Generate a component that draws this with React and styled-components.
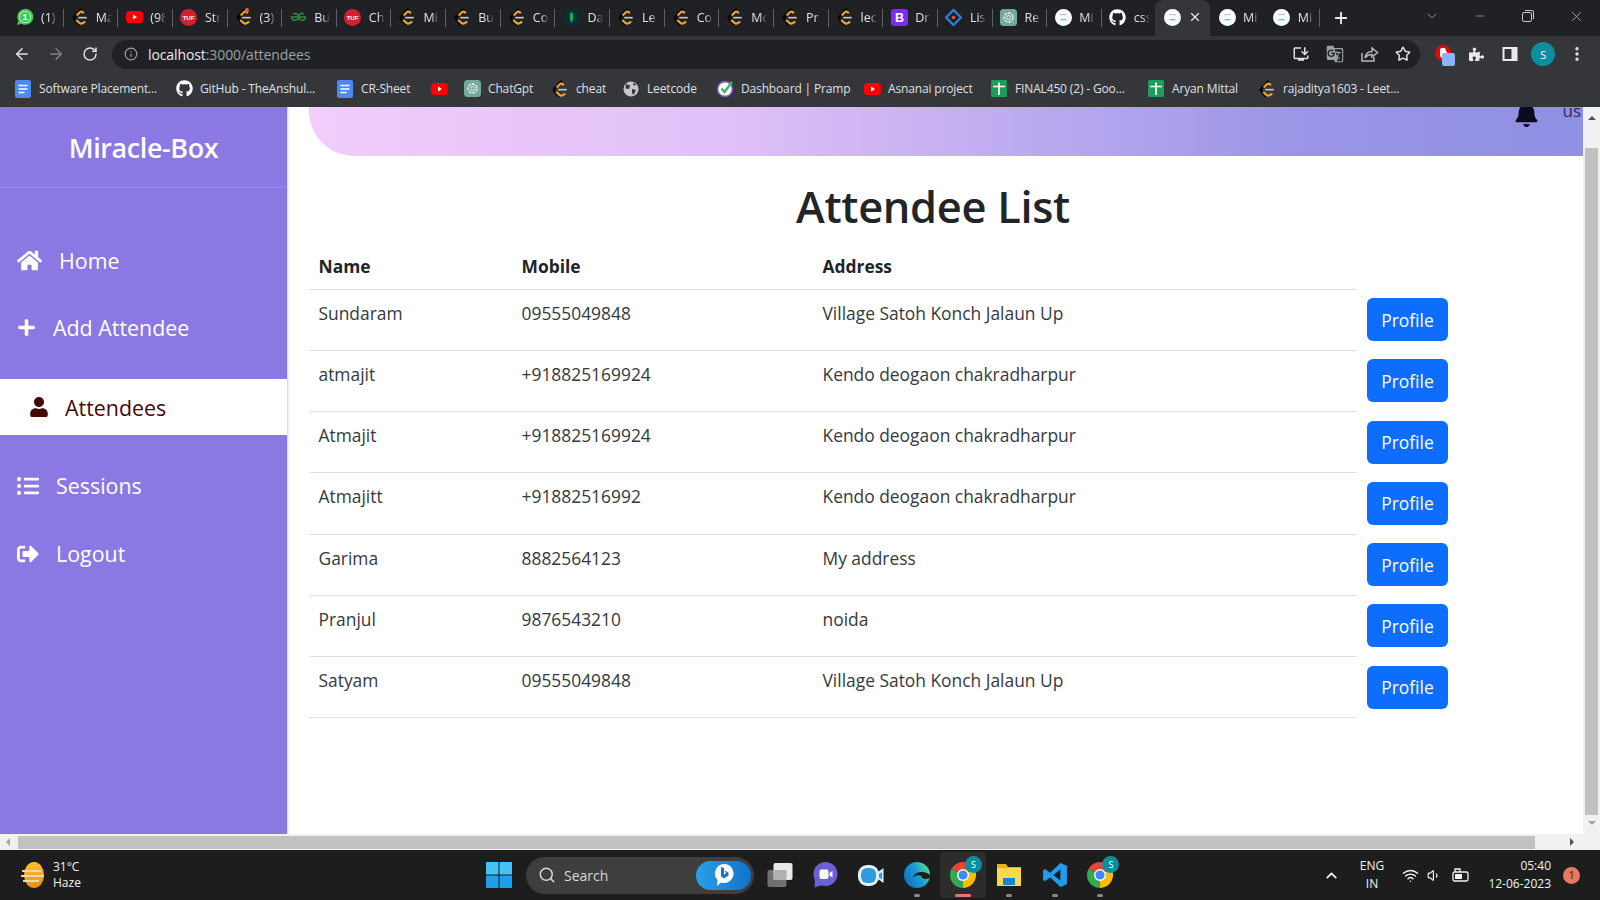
import React from "react"
import styled, { createGlobalStyle } from "styled-components"
import { FaHome, FaPlus, FaUser, FaListUl, FaSignOutAlt, FaBell, FaGithub, FaPuzzlePiece } from "react-icons/fa"
import { MdGTranslate, MdInstallDesktop } from "react-icons/md"
import { ArrowLeft, ArrowRight, RotateCw, Info, Star, MoreVertical, Plus, X, Minus, ChevronDown, ChevronUp, Search, Wifi, Volume1 } from "lucide-react"

const GlobalStyle = createGlobalStyle`
	html, body {
		margin: 0;
		padding: 0;
		overflow: hidden;
		background: #fff;
	}
	* {
		box-sizing: border-box;
	}
	body {
		font-family: "Open Sans", "Noto Sans", "Liberation Sans", sans-serif;
	}
`

const Shell = styled.div`
	width: 1600px;
	height: 900px;
	display: flex;
	flex-direction: column;
	overflow: hidden;
`

/* ---- favicons ---- */

const LeetIcon = ({ dot }) => (
	<svg width="18" height="18" viewBox="0 0 16 16">
		<path d="M9.5 .8 L3 7.6 Q2 8.8 3 10 L7.5 15" fill="none" stroke="#050505" strokeWidth="2.2" />
		<path d="M5 6.6 L8 3.6 Q9.6 2.6 11.4 4.6" fill="none" stroke="#f0a52b" strokeWidth="1.9" />
		<path d="M4.6 10.6 L7.4 13.2 Q9.6 15 12.6 12" fill="none" stroke="#f0a52b" strokeWidth="1.9" />
		<path d="M6.4 8.6 H14" stroke="#c4c4c4" strokeWidth="1.5" />
		{dot ? <circle cx="10.5" cy="2" r="1.9" fill="#e2624b" /> : null}
	</svg>
)

const YoutubeIcon = () => (
	<svg width="17" height="14" viewBox="0 0 17 14">
		<rect width="17" height="12" y="1" rx="3.5" fill="#f00" />
		<path d="M7 4.5 L11 7 L7 9.5 Z" fill="#fff" />
	</svg>
)

const TufIcon = () => (
	<svg width="17" height="17" viewBox="0 0 17 17">
		<circle cx="8.5" cy="8.5" r="8.5" fill="#d2202f" />
		<text x="8.5" y="10.5" fontSize="6" fontWeight="700" textAnchor="middle" fill="#fff" fontFamily="Liberation Sans">TUF</text>
	</svg>
)

const WhatsappIcon = () => (
	<svg width="18" height="18" viewBox="0 0 18 18">
		<path d="M1 17 L2.3 12.6 A8 8 0 1 1 5.4 15.8 Z" fill="#3ecb55" />
		<circle cx="9" cy="9" r="6" fill="#fff" />
		<circle cx="9" cy="9" r="5.4" fill="#3ecb55" />
		<text x="9" y="12" fontSize="9" fontWeight="700" textAnchor="middle" fill="#fff" fontFamily="Liberation Sans">1</text>
	</svg>
)

const GfgIcon = () => (
	<svg width="17" height="12" viewBox="0 0 17 12">
		<path d="M8.5 6 H1.5 A3.4 3.4 0 1 0 3 3 M8.5 6 H15.5 A3.4 3.4 0 1 1 14 3" fill="none" stroke="#2f8d46" strokeWidth="1.5" />
	</svg>
)

const MongoIcon = () => (
	<svg width="17" height="17" viewBox="0 0 17 17">
		<circle cx="8.5" cy="8.5" r="8.5" fill="#062f33" />
		<path d="M8.5 2.5 C11 5.5 11 10 8.5 14 C6 10 6 5.5 8.5 2.5 Z" fill="#13aa52" />
	</svg>
)

const BootstrapIcon = () => (
	<svg width="17" height="17" viewBox="0 0 17 17">
		<rect width="17" height="17" rx="3" fill="#7a2bf5" />
		<text x="8.5" y="13" fontSize="12.5" fontWeight="700" textAnchor="middle" fill="#fff" fontFamily="Liberation Sans">B</text>
	</svg>
)

const DiamondIcon = () => (
	<svg width="17" height="17" viewBox="0 0 17 17">
		<path d="M8.5 1 L16 8.5 L8.5 16 L1 8.5 Z" fill="none" stroke="#2f7fe0" strokeWidth="2.2" />
		<circle cx="8.5" cy="8.5" r="1.8" fill="#e0524a" />
	</svg>
)

const GptIcon = () => (
	<svg width="17" height="17" viewBox="0 0 17 17">
		<rect width="17" height="17" rx="3.5" fill="#74aa9c" />
		<circle cx="8.5" cy="8.5" r="4.5" fill="none" stroke="#e8f3f0" strokeWidth="1.4" strokeDasharray="3 1" />
		<circle cx="8.5" cy="8.5" r="2" fill="none" stroke="#e8f3f0" strokeWidth="1" />
	</svg>
)

const MiracleIcon = () => (
	<svg width="17" height="17" viewBox="0 0 17 17">
		<circle cx="8.5" cy="8.5" r="8.5" fill="#fff" />
		<rect x="5" y="5" width="7" height="1.2" fill="#c4c4c4" />
		<rect x="5.5" y="10" width="6" height="1.4" fill="#6cc7bd" />
	</svg>
)

const DocsIcon = () => (
	<svg width="16" height="18" viewBox="0 0 16 18">
		<rect width="16" height="18" rx="2" fill="#4a8af4" />
		<path d="M3.5 5.5 H12.5 M3.5 9 H12.5 M3.5 12.5 H9.5" stroke="#fff" strokeWidth="1.5" />
	</svg>
)

const SheetsIcon = () => (
	<svg width="16" height="17" viewBox="0 0 16 17">
		<rect width="16" height="17" rx="1.5" fill="#1e9c5a" />
		<path d="M2 6.5 H14 M8 2.5 V15" stroke="#fff" strokeWidth="1.7" />
	</svg>
)

const GlobeIcon = () => (
	<svg width="16" height="16" viewBox="0 0 16 16">
		<circle cx="8" cy="8" r="7.5" fill="#c4c7c5" />
		<path d="M3 3 L7 4.5 L6 8 L2.5 7.5 Z M9 8 L13 9 L10.5 14 L9 12 Z M10 1.5 L13.5 4 L10.5 4.5 Z" fill="#35363a" />
	</svg>
)

const PrampIcon = () => (
	<svg width="17" height="17" viewBox="0 0 17 17">
		<circle cx="8" cy="9" r="7.4" fill="#fff" stroke="#7c5cc4" strokeWidth="1.6" />
		<path d="M4.5 8.5 L7.5 12 L15 2" fill="none" stroke="#3fb56b" strokeWidth="2.4" />
	</svg>
)

const favicons = {
	wa: <WhatsappIcon />,
	lc: <LeetIcon />,
	lcdot: <LeetIcon dot />,
	yt: <YoutubeIcon />,
	tuf: <TufIcon />,
	gfg: <GfgIcon />,
	mongo: <MongoIcon />,
	bs: <BootstrapIcon />,
	diamond: <DiamondIcon />,
	gpt: <GptIcon />,
	mb: <MiracleIcon />,
	gh: <FaGithub size={17} color="#fff" />,
	docs: <DocsIcon />,
	sheets: <SheetsIcon />,
	globe: <GlobeIcon />,
	pramp: <PrampIcon />,
}

/* ---- tab strip ---- */

const TabStrip = styled.div`
	height: 36px;
	flex: none;
	display: flex;
	padding-left: 8px;
	background: #202124;
`

const Tab = styled.div`
	flex: 0 0 54.65px;
	height: 36px;
	display: flex;
	align-items: center;
	gap: 7px;
	padding: 0 0 2px 8px;
	position: relative;
	background: ${(props) => (props.$active ? "#35363a" : "transparent")};
	border-radius: 8px 8px 0 0;
	&::after {
		content: "";
		display: ${(props) => (props.$sep ? "block" : "none")};
		position: absolute;
		right: -1px;
		top: 9px;
		height: 18px;
		width: 1px;
		background: #5f6368;
	}
`

const TabIcon = styled.span`
	width: 18px;
	height: 18px;
	flex: none;
	display: flex;
	align-items: center;
	justify-content: center;
`

const TabTitle = styled.span`
	width: 16px;
	overflow: hidden;
	white-space: nowrap;
	font-size: 12.5px;
	color: #dee1e6;
	-webkit-mask-image: linear-gradient(to right, #000 55%, transparent 100%);
	mask-image: linear-gradient(to right, #000 55%, transparent 100%);
`

const NewTab = styled.div`
	width: 44px;
	display: flex;
	align-items: center;
	justify-content: center;
	color: #e8eaed;
`

const WindowControls = styled.div`
	margin-left: auto;
	display: flex;
`

const WindowButton = styled.div`
	width: 48px;
	height: 32px;
	display: flex;
	align-items: center;
	justify-content: center;
	color: #c4c7c5;
`

const MaxIcon = () => (
	<svg width="12" height="12" viewBox="0 0 12 12" fill="none" stroke="#c4c7c5">
		<rect x="0.5" y="2.5" width="9" height="9" rx="1.5" />
		<path d="M3 .5 H10 A1.5 1.5 0 0 1 11.5 2 V9" />
	</svg>
)

const tabs = [
	["wa", "(1)"], ["lc", "Ma"], ["yt", "(98"], ["tuf", "Str"], ["lcdot", "(3)"], ["gfg", "Bu"],
	["tuf", "Ch"], ["lc", "Mi"], ["lc", "Bu"], ["lc", "Co"], ["mongo", "Da"], ["lc", "Le"],
	["lc", "Co"], ["lc", "Mc"], ["lc", "Pr"], ["lc", "lec"], ["bs", "Dr"], ["diamond", "Lis"],
	["gpt", "Re"], ["mb", "Mi"], ["gh", "css"], ["mb", null], ["mb", "Mi"], ["mb", "Mi"],
]

/* ---- toolbar ---- */

const Toolbar = styled.div`
	height: 36px;
	flex: none;
	display: flex;
	align-items: center;
	padding-left: 5px;
	background: #35363a;
`

const NavButton = styled.div`
	width: 34px;
	height: 30px;
	display: flex;
	align-items: center;
	justify-content: center;
	color: ${(props) => (props.$dim ? "#7d8084" : "#dfe1e5")};
`

const Omnibox = styled.div`
	width: 1308px;
	height: 29px;
	margin: 0 7px 0 5px;
	display: flex;
	align-items: center;
	padding-left: 12px;
	border-radius: 15px;
	background: #202124;
	color: #9aa0a6;
	font-size: 14px;
`

const Url = styled.span`
	margin-left: 10px;
	letter-spacing: -0.1px;
	color: #9aa0a6;
	b {
		font-weight: 400;
		color: #e8eaed;
	}
`

const OmniActions = styled.div`
	margin-left: auto;
	display: flex;
`

const ExtButton = styled.div`
	width: 33.25px;
	height: 30px;
	display: flex;
	align-items: center;
	justify-content: center;
	position: relative;
	color: #dfe1e5;
`

const ExtBadge = styled.span`
	position: absolute;
	right: 5px;
	bottom: 3px;
	width: 13px;
	height: 13px;
	border-radius: 2px;
	background: #8ab4f8;
`

const Avatar = styled.span`
	width: 24px;
	height: 24px;
	border-radius: 50%;
	background: #0b8f9e;
	color: #fff;
	font-size: 11px;
	display: flex;
	align-items: center;
	justify-content: center;
`

const SidePanelIcon = () => (
	<svg width="16" height="16" viewBox="0 0 16 16">
		<path d="M0.5 1 H15.5 V15 H0.5 Z M2.5 3 V13 H9.5 V3 Z" fill="#e8eaed" fillRule="evenodd" />
	</svg>
)

const HandIcon = () => (
	<svg width="18" height="18" viewBox="0 0 18 18">
		<circle cx="8" cy="8" r="8" fill="#d90c10" />
		<path d="M5 6 Q5 3 6.5 3 L9 3 Q11 3 11 6 L12.5 8 L10.5 9 V12 L7.5 13.5 Q5 12 5 10 Z" fill="#fff" />
	</svg>
)

const ShareIcon = () => (
	<svg width="19" height="18" viewBox="0 0 19 18" fill="none" stroke="#b5b8bc" strokeWidth="1.5">
		<path d="M2 8 V16 H14 V12" />
		<path d="M5 13 C6 8 9 6.5 12 6.5 V3 L17.5 7.5 L12 12 V9.5 C9 9.5 7 10.5 5 13 Z" />
	</svg>
)

/* ---- bookmarks ---- */

const BookmarkBar = styled.div`
	height: 35px;
	flex: none;
	display: flex;
	align-items: center;
	padding: 0 0 2px 14px;
	background: #35363a;
`

const Bookmark = styled.div`
	flex: 0 0 ${(props) => props.$w}px;
	display: flex;
	align-items: center;
	gap: 7px;
	font-size: 12px;
	letter-spacing: -0.15px;
	color: #dee1e6;
	white-space: nowrap;
`

const bookmarks = [
	["docs", "Software Placement...", 161],
	["gh", "GitHub - TheAnshul...", 161],
	["docs", "CR-Sheet", 94],
	["yt", "", 33],
	["gpt", "ChatGpt", 88],
	["lc", "cheat", 71],
	["globe", "Leetcode", 94],
	["pramp", "Dashboard | Pramp", 147],
	["yt", "Asnanai project", 127],
	["sheets", "FINAL450 (2) - Goo...", 157],
	["sheets", "Aryan Mittal", 111],
	["lc", "rajaditya1603 - Leet...", 200],
]

/* ---- page ---- */

const Viewport = styled.div`
	flex: 1;
	min-height: 0;
	display: flex;
	background: #fff;
`

const Sidebar = styled.aside`
	width: 287px;
	flex: none;
	background: #8b78e3;
	box-shadow: 1px 0 2px rgba(0, 0, 0, 0.2);
	color: #fff;
`

const Brand = styled.div`
	height: 81px;
	display: flex;
	align-items: center;
	justify-content: center;
	border-bottom: 1px solid #9c8ce8;
	font-size: 27px;
	font-weight: 600;
	letter-spacing: -0.4px;
`

const NavList = styled.nav`
	display: flex;
	flex-direction: column;
	padding-top: 39px;
`

const NavItem = styled.div`
	height: ${(props) => props.$h}px;
	margin-bottom: ${(props) => props.$mb || 0}px;
	display: flex;
	align-items: center;
	gap: ${(props) => props.$gap}px;
	padding-left: ${(props) => (props.$active ? 29 : 17)}px;
	background: ${(props) => (props.$active ? "#fff" : "transparent")};
	color: ${(props) => (props.$active ? "#450808" : "#fff")};
	font-size: 21.4px;
`

const Main = styled.main`
	flex: 1;
	min-width: 0;
	padding-left: 22px;
`

const Banner = styled.div`
	height: 49px;
	display: flex;
	justify-content: flex-end;
	gap: 23px;
	overflow: hidden;
	padding-right: 2px;
	border-bottom-left-radius: 45px;
	background: linear-gradient(to right, #f1cdfc 0%, #e0c0f7 33%, #b3a5ee 62%, #9a95e6 78%, #8f8fe3 100%);
	color: #2e2a60;
`

const BellWrap = styled.div`
	margin-top: -5px;
	color: #0b0b22;
`

const BannerUser = styled.div`
	margin-top: -8px;
	font-size: 17px;
`

const Content = styled.div`
	padding-right: 26px;
`

const Title = styled.h1`
	margin: 0;
	height: 93px;
	padding-top: 20px;
	text-align: center;
	font-size: 43.4px;
	line-height: 62px;
	font-weight: 600;
	letter-spacing: -0.3px;
	color: #212529;
`

const Table = styled.table`
	width: 1248px;
	table-layout: fixed;
	border-collapse: collapse;
	color: #212529;
	font-size: 17.4px;
`

const Col = styled.col`
	width: ${(props) => props.$w}px;
`

const HeadCell = styled.th`
	height: 40px;
	padding: 0 9.5px 5px;
	text-align: left;
	font-weight: 700;
	border-bottom: 1px solid #dee2e6;
`

const Row = styled.tr`
	height: 61.25px;
`

const Cell = styled.td`
	padding: 10px 9.5px 0;
	vertical-align: top;
	line-height: 27px;
	color: #343a40;
	border-bottom: 1px solid #dee2e6;
`

const ActionCell = styled.td`
	padding: 9px 0 0 10px;
	vertical-align: top;
`

const ProfileButton = styled.button`
	width: 81px;
	height: 43px;
	padding: 0;
	border: none;
	border-radius: 6px;
	background: #0d6efd;
	color: #fff;
	font-family: inherit;
	font-size: 17.4px;
`

const VScroll = styled.div`
	width: 17px;
	flex: none;
	position: relative;
	background: #f1f1f1;
`

const VThumb = styled.div`
	position: absolute;
	top: 41px;
	bottom: 19px;
	left: 2px;
	right: 2px;
	background: #c1c1c1;
`

const ScrollArrow = styled.span`
	position: absolute;
	width: 0;
	height: 0;
	border: 4px solid transparent;
	${(props) => props.$pos}
`

const HScroll = styled.div`
	height: 16px;
	flex: none;
	position: relative;
	background: #f1f1f1;
`

const HThumb = styled.div`
	position: absolute;
	left: 18px;
	width: 1517px;
	top: 2px;
	bottom: 1px;
	background: #c1c1c1;
`

/* ---- taskbar ---- */

const Taskbar = styled.footer`
	height: 50px;
	flex: none;
	display: flex;
	align-items: center;
	background: #1d1d1d;
	color: #f3f3f3;
`

const Weather = styled.div`
	width: 478px;
	display: flex;
	align-items: center;
	gap: 8px;
	padding-left: 21px;
	font-size: 12px;
	line-height: 16px;
`

const StartButton = styled.div`
	width: 42px;
	display: flex;
	justify-content: center;
`

const SearchBox = styled.div`
	width: 228px;
	height: 37px;
	margin-left: 6px;
	display: flex;
	align-items: center;
	gap: 8px;
	padding: 0 3px 0 12px;
	border-radius: 19px;
	background: #3e3e3e;
	color: #d8d8d8;
	font-size: 14px;
`

const BingPill = styled.div`
	margin-left: auto;
	width: 55px;
	height: 29px;
	border-radius: 15px;
	background: linear-gradient(to right, #2a9fe8, #0f74cc);
	display: flex;
	align-items: center;
	justify-content: center;
`

const AppIcons = styled.div`
	display: flex;
	margin-left: 3px;
`

const AppButton = styled.div`
	width: 45.8px;
	height: 46px;
	display: flex;
	align-items: center;
	justify-content: center;
	position: relative;
	border-radius: 4px;
	background: ${(props) => (props.$on ? "#2c2c2c" : "transparent")};
`

const RunDot = styled.span`
	position: absolute;
	bottom: 1px;
	left: 50%;
	transform: translateX(-50%);
	width: ${(props) => (props.$on ? 16 : 6)}px;
	height: 3px;
	border-radius: 2px;
	background: ${(props) => (props.$on ? "#e8796a" : "#8a8a8a")};
`

const ProfileBadge = styled.span`
	position: absolute;
	top: 4px;
	right: 4px;
	width: 17px;
	height: 17px;
	border-radius: 50%;
	background: #0b8f9e;
	color: #fff;
	font-size: 9px;
	display: flex;
	align-items: center;
	justify-content: center;
`

const Tray = styled.div`
	margin-left: auto;
	display: flex;
	align-items: center;
	padding-right: 20px;
`

const TrayIcon = styled.div`
	width: ${(props) => props.$w}px;
	display: flex;
	justify-content: center;
`

const Lang = styled.div`
	width: 42px;
	text-align: center;
	font-size: 12px;
	line-height: 18px;
`

const Clock = styled.div`
	width: 70px;
	text-align: right;
	font-size: 12px;
	line-height: 18px;
	white-space: nowrap;
`

const NotifyDot = styled.div`
	width: 17px;
	height: 17px;
	margin-left: 12px;
	border-radius: 50%;
	background: #e8795f;
	color: #1d1d1d;
	font-size: 10px;
	display: flex;
	align-items: center;
	justify-content: center;
`

const WindowsLogo = () => (
	<svg width="26" height="26" viewBox="0 0 26 26">
		<path d="M0 0 H12.5 V12.5 H0 Z M13.5 0 H26 V12.5 H13.5 Z" fill="#45c3f7" />
		<path d="M0 13.5 H12.5 V26 H0 Z M13.5 13.5 H26 V26 H13.5 Z" fill="#1a9fe8" />
	</svg>
)

const SunHaze = () => (
	<svg width="24" height="26" viewBox="0 0 24 26">
		<defs>
			<linearGradient id="sun" x1="0" y1="0" x2="0" y2="1">
				<stop offset="0" stopColor="#ffc629" />
				<stop offset="1" stopColor="#ef8a1f" />
			</linearGradient>
		</defs>
		<ellipse cx="13" cy="13" rx="10" ry="13" fill="url(#sun)" />
		<path d="M1 9 H20 M0 14 H23 M2 19 H18" stroke="#e8d9b0" strokeWidth="1.8" />
	</svg>
)

const BingMark = () => (
	<svg width="20" height="24" viewBox="0 0 20 24">
		<path d="M10 1 A9.5 9.5 0 1 1 7 19.5 L3 23 L3.5 17 A9.5 9.5 0 0 1 10 1 Z" fill="#fff" />
		<path d="M7 4 L10 5 V11.5 L12.5 10 L11 9 L10.5 7.5 L14.5 9.5 V12.5 L10 15.5 L7 13.5 Z" fill="#1478cf" />
	</svg>
)

const TaskViewIcon = () => (
	<svg width="26" height="24" viewBox="0 0 26 24">
		<rect x="0.5" y="7" width="19" height="17" rx="2" fill="#707070" />
		<rect x="6.5" y="0" width="19" height="17" rx="2" fill="#e8e8e8" />
		<rect x="6.5" y="7" width="13" height="10" fill="#b0b0b0" />
	</svg>
)

const TeamsIcon = () => (
	<svg width="25" height="26" viewBox="0 0 25 26">
		<circle cx="12.5" cy="12" r="12" fill="#6d5fd6" />
		<path d="M2 16 L1.5 25.5 L9 23 Z" fill="#6d5fd6" />
		<rect x="6.5" y="7.5" width="9" height="9.5" rx="2" fill="#fff" />
		<path d="M16.5 11 L19.5 9 V15.5 L16.5 13.5 Z" fill="#fff" />
	</svg>
)

const MeetIcon = () => (
	<svg width="26" height="26" viewBox="0 0 26 26">
		<rect x="0" y="3" width="21" height="21" rx="9" fill="#dff2fb" />
		<rect x="3" y="6" width="15" height="15" rx="6" fill="#2f9be0" />
		<path d="M20 10 L25.5 6 V21 L20 17 Z" fill="#dff2fb" />
		<path d="M21 12 L24 10 V17.5 L21 15.5 Z" fill="#2f9be0" />
	</svg>
)

const EdgeIcon = () => (
	<svg width="26" height="26" viewBox="0 0 26 26">
		<defs>
			<linearGradient id="edge" x1="0" y1="0.8" x2="1" y2="0.3">
				<stop offset="0" stopColor="#0c6fc4" />
				<stop offset="0.55" stopColor="#1b9bd8" />
				<stop offset="1" stopColor="#53d88b" />
			</linearGradient>
		</defs>
		<circle cx="13" cy="13" r="13" fill="url(#edge)" />
		<path d="M9 16 C10 9 21 8 26 13 L26 16 C22 18 17 17 17.5 14 C14 12.5 11 13 9 16 Z" fill="#1d1d1d" />
	</svg>
)

const ChromeIcon = () => (
	<svg width="26" height="26" viewBox="0 0 26 26">
		<circle cx="13" cy="13" r="9" fill="none" stroke="#ea4335" strokeWidth="8" pathLength="3" strokeDasharray="1 2" transform="rotate(-150 13 13)" />
		<circle cx="13" cy="13" r="9" fill="none" stroke="#fbbc04" strokeWidth="8" pathLength="3" strokeDasharray="1 2" transform="rotate(-30 13 13)" />
		<circle cx="13" cy="13" r="9" fill="none" stroke="#34a853" strokeWidth="8" pathLength="3" strokeDasharray="1 2" transform="rotate(90 13 13)" />
		<circle cx="13" cy="13" r="6" fill="#fff" />
		<circle cx="13" cy="13" r="4.6" fill="#4285f4" />
	</svg>
)

const FolderIcon = () => (
	<svg width="26" height="24" viewBox="0 0 26 24">
		<path d="M1 1 H10 L12 4 H25 V23 H1 Z" fill="#e8b21c" />
		<rect x="1" y="5" width="24" height="18" fill="#fcd94a" />
		<rect x="7" y="15" width="12" height="7" fill="#1d82d2" />
	</svg>
)

const VsCodeIcon = () => (
	<svg width="26" height="26" viewBox="0 0 24 24">
		<path d="M17 1 L7.5 10 L3 6.5 L1 7.5 V16.5 L3 17.5 L7.5 14 L17 23 L23 20.5 V3.5 Z M17 7 V17 L10.5 12 Z" fill="#1f9cf0" fillRule="evenodd" />
	</svg>
)

const BatteryIcon = () => (
	<svg width="18" height="16" viewBox="0 0 18 16" fill="none" stroke="#f3f3f3" strokeWidth="1.3">
		<rect x="1" y="5" width="15" height="9" rx="1.5" />
		<path d="M3 5 L3 2 L8 2 L8 5" />
		<rect x="3" y="7" width="7" height="5" fill="#f3f3f3" stroke="none" />
	</svg>
)

const attendees = [
	["Sundaram", "09555049848", "Village Satoh Konch Jalaun Up"],
	["atmajit", "+918825169924", "Kendo deogaon chakradharpur"],
	["Atmajit", "+918825169924", "Kendo deogaon chakradharpur"],
	["Atmajitt", "+91882516992", "Kendo deogaon chakradharpur"],
	["Garima", "8882564123", "My address"],
	["Pranjul", "9876543210", "noida"],
	["Satyam", "09555049848", "Village Satoh Konch Jalaun Up"],
]

const taskApps = [
	{ icon: <TaskViewIcon /> },
	{ icon: <TeamsIcon /> },
	{ icon: <MeetIcon /> },
	{ icon: <EdgeIcon />, dot: true },
	{ icon: <ChromeIcon />, dot: true, on: true, badge: true },
	{ icon: <FolderIcon />, dot: true },
	{ icon: <VsCodeIcon />, dot: true },
	{ icon: <ChromeIcon />, dot: true, badge: true },
]

export default function App() {
	return (
		<Shell>
			<GlobalStyle />
			<TabStrip>
				{tabs.map(([icon, title], i) => (
					<Tab key={i} $active={title === null} $sep={title !== null && i !== 20 && i !== 22 ? true : i === 23}>
						<TabIcon>{favicons[icon]}</TabIcon>
						{title === null ? <X size={14} color="#e8eaed" /> : <TabTitle>{title}</TabTitle>}
					</Tab>
				))}
				<NewTab>
					<Plus size={18} strokeWidth={2.5} />
				</NewTab>
				<WindowControls>
					<WindowButton><ChevronDown size={16} strokeWidth={1} /></WindowButton>
					<WindowButton><Minus size={14} strokeWidth={1} /></WindowButton>
					<WindowButton><MaxIcon /></WindowButton>
					<WindowButton><X size={17} strokeWidth={1} /></WindowButton>
				</WindowControls>
			</TabStrip>

			<Toolbar>
				<NavButton><ArrowLeft size={18} /></NavButton>
				<NavButton $dim><ArrowRight size={18} /></NavButton>
				<NavButton><RotateCw size={16} strokeWidth={2.2} /></NavButton>
				<Omnibox>
					<Info size={14} />
					<Url><b>localhost</b>:3000/attendees</Url>
					<OmniActions>
						<NavButton><MdInstallDesktop size={18} /></NavButton>
						<NavButton><MdGTranslate size={18} color="#9aa0a6" /></NavButton>
						<NavButton><ShareIcon /></NavButton>
						<NavButton><Star size={16} strokeWidth={2.2} /></NavButton>
					</OmniActions>
				</Omnibox>
				<ExtButton><HandIcon /><ExtBadge /></ExtButton>
				<ExtButton><FaPuzzlePiece size={15} color="#e8eaed" /></ExtButton>
				<ExtButton><SidePanelIcon /></ExtButton>
				<ExtButton><Avatar>S</Avatar></ExtButton>
				<ExtButton><MoreVertical size={18} strokeWidth={2.5} /></ExtButton>
			</Toolbar>

			<BookmarkBar>
				{bookmarks.map(([icon, label, w], i) => (
					<Bookmark key={i} $w={w}>
						<TabIcon>{favicons[icon]}</TabIcon>
						{label ? <span>{label}</span> : null}
					</Bookmark>
				))}
			</BookmarkBar>

			<Viewport>
				<Sidebar>
					<Brand>Miracle-Box</Brand>
					<NavList>
						<NavItem $h={67} $gap={17}><FaHome size={25} />Home</NavItem>
						<NavItem $h={67} $gap={17} $mb={18}><FaPlus size={19} />Add Attendee</NavItem>
						<NavItem $h={56} $gap={16} $mb={17} $active><FaUser size={20} />Attendees</NavItem>
						<NavItem $h={67} $gap={17}><FaListUl size={22} />Sessions</NavItem>
						<NavItem $h={69} $gap={17}><FaSignOutAlt size={22} />Logout</NavItem>
					</NavList>
				</Sidebar>
				<Main>
					<Banner>
						<BellWrap><FaBell size={25} /></BellWrap>
						<BannerUser>us</BannerUser>
					</Banner>
					<Content>
						<Title>Attendee List</Title>
						<Table>
							<colgroup>
								<Col $w={203} />
								<Col $w={301} />
								<Col $w={544} />
								<Col $w={200} />
							</colgroup>
							<thead>
								<tr>
									<HeadCell>Name</HeadCell>
									<HeadCell>Mobile</HeadCell>
									<HeadCell>Address</HeadCell>
									<th />
								</tr>
							</thead>
							<tbody>
								{attendees.map(([name, mobile, address], i) => (
									<Row key={i}>
										<Cell>{name}</Cell>
										<Cell>{mobile}</Cell>
										<Cell>{address}</Cell>
										<ActionCell><ProfileButton>Profile</ProfileButton></ActionCell>
									</Row>
								))}
							</tbody>
						</Table>
					</Content>
				</Main>
				<VScroll>
					<ScrollArrow $pos="top: 5px; left: 4.5px; border-bottom-color: #505050;" />
					<VThumb />
					<ScrollArrow $pos="bottom: 5px; left: 4.5px; border-top-color: #a3a3a3;" />
				</VScroll>
			</Viewport>
			<HScroll>
				<ScrollArrow $pos="left: 2px; top: 4px; border-right-color: #a3a3a3;" />
				<HThumb />
				<ScrollArrow $pos="right: 22px; top: 4px; border-left-color: #505050;" />
			</HScroll>

			<Taskbar>
				<Weather>
					<SunHaze />
					<div>
						<div>31°C</div>
						<div>Haze</div>
					</div>
				</Weather>
				<StartButton><WindowsLogo /></StartButton>
				<SearchBox>
					<Search size={18} />
					Search
					<BingPill><BingMark /></BingPill>
				</SearchBox>
				<AppIcons>
					{taskApps.map((app, i) => (
						<AppButton key={i} $on={app.on}>
							{app.icon}
							{app.badge ? <ProfileBadge>S</ProfileBadge> : null}
							{app.dot ? <RunDot $on={app.on} /> : null}
						</AppButton>
					))}
				</AppIcons>
				<Tray>
					<TrayIcon $w={40}><ChevronUp size={17} strokeWidth={2.5} /></TrayIcon>
					<Lang>ENG<br />IN</Lang>
					<TrayIcon $w={34}><Wifi size={17} /></TrayIcon>
					<TrayIcon $w={14}><Volume1 size={17} /></TrayIcon>
					<TrayIcon $w={40}><BatteryIcon /></TrayIcon>
					<Clock>05:40<br />12-06-2023</Clock>
					<NotifyDot>1</NotifyDot>
				</Tray>
			</Taskbar>
		</Shell>
	)
}
